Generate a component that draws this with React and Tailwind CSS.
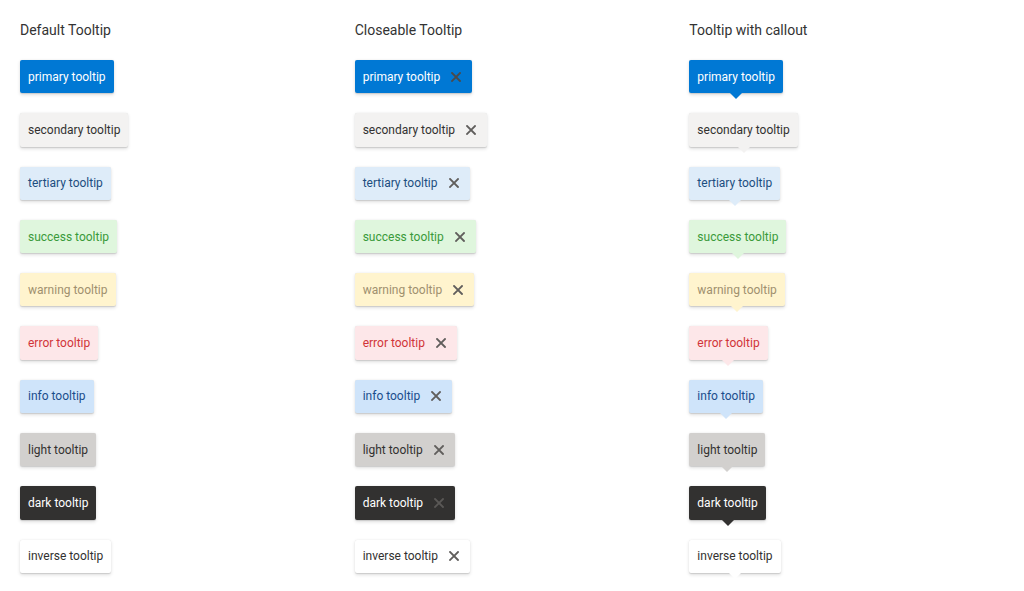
import React from 'react';

// Tooltip variants: background, text and close icon colours
const VARIANTS = [
  { name: 'primary', bg: 'bg-[#0078d4]', text: 'text-white', x: 'text-[#4a4a4a]', arrow: 'border-t-[#0078d4]' },
  { name: 'secondary', bg: 'bg-[#f3f2f1]', text: 'text-[#323130]', x: 'text-[#605e5c]', arrow: 'border-t-[#f3f2f1]' },
  { name: 'tertiary', bg: 'bg-[#deecf9]', text: 'text-[#1c4e80]', x: 'text-[#605e5c]', arrow: 'border-t-[#deecf9]' },
  { name: 'success', bg: 'bg-[#dff6dd]', text: 'text-[#3a9a3a]', x: 'text-[#605e5c]', arrow: 'border-t-[#dff6dd]' },
  { name: 'warning', bg: 'bg-[#fff4ce]', text: 'text-[#a0906e]', x: 'text-[#605e5c]', arrow: 'border-t-[#fff4ce]' },
  { name: 'error', bg: 'bg-[#fde7e9]', text: 'text-[#d13438]', x: 'text-[#605e5c]', arrow: 'border-t-[#fde7e9]' },
  { name: 'info', bg: 'bg-[#cfe4fa]', text: 'text-[#1a4d8c]', x: 'text-[#605e5c]', arrow: 'border-t-[#cfe4fa]' },
  { name: 'light', bg: 'bg-[#d2d0ce]', text: 'text-[#323130]', x: 'text-[#605e5c]', arrow: 'border-t-[#d2d0ce]' },
  { name: 'dark', bg: 'bg-[#323130]', text: 'text-white', x: 'text-[#5a5856]', arrow: 'border-t-[#323130]' },
  { name: 'inverse', bg: 'bg-white', text: 'text-[#323130]', x: 'text-[#605e5c]', arrow: 'border-t-white' },
];

const shadow = 'shadow-[0_1.6px_3.6px_rgba(0,0,0,0.13),0_0.3px_0.9px_rgba(0,0,0,0.11)]';

function CloseIcon({ className }) {
  return (
    <svg width="10" height="10" viewBox="0 0 10 10" className={className}>
      <path d="M1 1 L9 9 M9 1 L1 9" stroke="currentColor" strokeWidth="1.8" strokeLinecap="square" />
    </svg>
  );
}

function Tooltip({ v, closeable, callout }) {
  return (
    <div className="relative inline-flex">
      <div className={`flex h-[33.3px] items-center rounded-[2px] pl-2 ${closeable ? 'pr-[11px]' : 'pr-2'} text-[12px] ${v.bg} ${v.text} ${shadow}`}>
        <span>{v.name} tooltip</span>
        {closeable && <CloseIcon className={`ml-[11px] ${v.x}`} />}
      </div>
      {callout && (
        <div className={`absolute left-1/2 top-full h-0 w-0 -translate-x-1/2 border-x-[6px] border-t-[6px] border-x-transparent ${v.arrow}`} />
      )}
    </div>
  );
}

function Column({ title, closeable, callout }) {
  return (
    <div className="flex w-[335px] flex-col items-start">
      <h2 className="mb-5 h-[19px] text-[14px] leading-[19px] text-[#333]">{title}</h2>
      <div className="flex flex-col items-start gap-5">
        {VARIANTS.map((v) => (
          <Tooltip key={v.name} v={v} closeable={closeable} callout={callout} />
        ))}
      </div>
    </div>
  );
}

export default function App() {
  return (
    <div className="flex min-h-[591px] bg-white pl-5 pt-[21px] font-['Roboto',sans-serif]">
      <Column title="Default Tooltip" />
      <Column title="Closeable Tooltip" closeable />
      <Column title="Tooltip with callout" callout />
    </div>
  );
}
